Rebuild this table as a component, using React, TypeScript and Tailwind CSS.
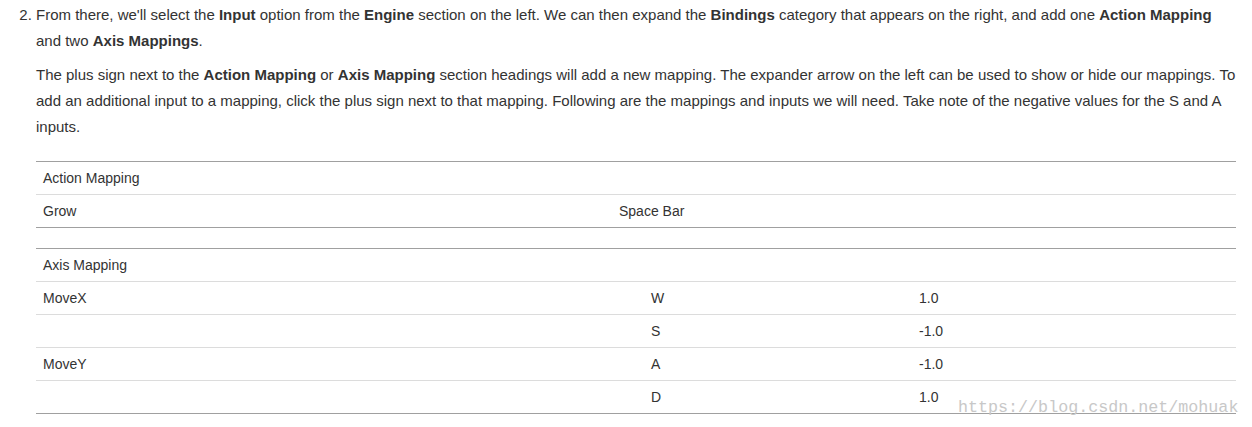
const font = { fontFamily: '"Liberation Sans", Arial, sans-serif' }

function Row({ cells, widths, last }: { cells: string[]; widths: string[]; last?: boolean }) {
  return (
    <tr className={last ? 'border-b border-[#a0a0a0]' : 'border-b border-[#dcdcdc]'}>
      {cells.map((c, i) => (
        <td key={i} className={`h-[33px] px-[7px] py-0 align-middle ${widths[i]}`}>
          {c}
        </td>
      ))}
    </tr>
  )
}

export default function App() {
  const w1 = ['w-[576px]', '']
  const w2 = ['w-[608px]', 'w-[268px]', '']

  return (
    <div className="relative w-[1252px] h-[427px] bg-white text-[15px] leading-[26px] text-[#333]" style={font}>
      <ol start={2} className="list-decimal pl-[36px] pr-[12px] pt-[2px] m-0">
        <li className="pl-0">
          <p className="m-0">
            From there, we'll select the <b>Input</b> option from the <b>Engine</b> section on the left. We can then expand
            the <b>Bindings</b> category that appears on the right, and add one <b>Action Mapping</b> and two{' '}
            <b>Axis Mappings</b>.
          </p>
          <p className="mt-[8px] mb-0">
            The plus sign next to the <b>Action Mapping</b> or <b>Axis Mapping</b> section headings will add a new mapping.
            The expander arrow on the left can be used to show or hide our mappings. To add an additional input to a
            mapping, click the plus sign next to that mapping. Following are the mappings and inputs we will need. Take note
            of the negative values for the S and A inputs.
          </p>

          <table className="mt-[21px] w-[1200px] border-collapse border-t border-[#a0a0a0] text-[14px] leading-[20px]">
            <tbody>
              <Row cells={['Action Mapping', '']} widths={w1} />
              <Row cells={['Grow', 'Space Bar']} widths={w1} last />
            </tbody>
          </table>

          <table className="mt-[20px] w-[1200px] border-collapse border-t border-[#a0a0a0] text-[14px] leading-[20px]">
            <tbody>
              <Row cells={['Axis Mapping', '', '']} widths={w2} />
              <Row cells={['MoveX', 'W', '1.0']} widths={w2} />
              <Row cells={['', 'S', '-1.0']} widths={w2} />
              <Row cells={['MoveY', 'A', '-1.0']} widths={w2} />
              <Row cells={['', 'D', '1.0']} widths={w2} last />
            </tbody>
          </table>
        </li>
      </ol>

      <div
        className="absolute left-[958px] top-[398px] text-[16.7px] leading-[20px] text-[#c8c8c8]"
        style={{ fontFamily: '"Liberation Mono", "DejaVu Sans Mono", monospace' }}
      >
        https://blog.csdn.net/mohuak
      </div>
    </div>
  )
}
